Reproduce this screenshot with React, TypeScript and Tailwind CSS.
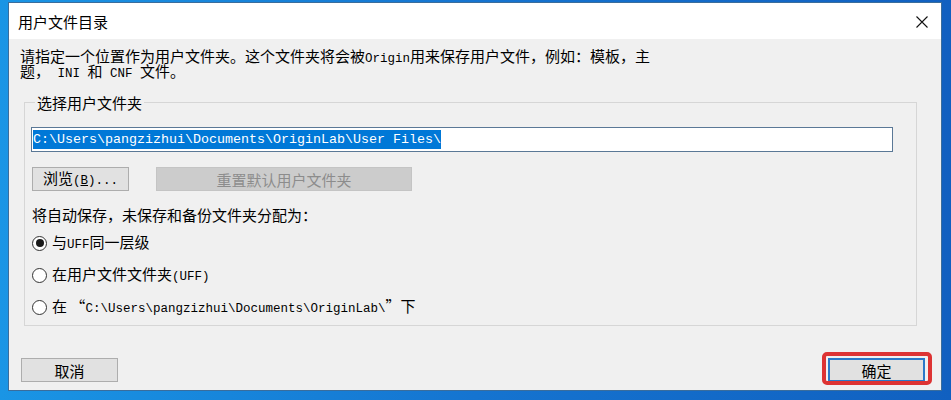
import React from "react";

const cjk = "font-['Noto_Sans_CJK_SC',sans-serif]";

function M({ children }: { children: React.ReactNode }) {
  return (
    <span className="font-['Liberation_Mono',monospace] text-[12.5px] leading-[15px] whitespace-pre">
      {children}
    </span>
  );
}

function Radio({ checked, children }: { checked?: boolean; children: React.ReactNode }) {
  return (
    <div className="flex items-center h-[20px]">
      <span className="flex items-center justify-center w-[15px] h-[15px] rounded-full border border-[#333333] bg-white">
        {checked && <span className="w-[8px] h-[8px] rounded-full bg-[#1a1a1a]" />}
      </span>
      <span className="ml-[5px] leading-[15px]">{children}</span>
    </div>
  );
}

export default function App() {
  return (
    <div className="w-[951px] h-[400px] overflow-hidden bg-gradient-to-r from-[#1a95e5] via-[#1574d0] to-[#1160c0] pt-[2px] pl-[8px]">
      <div className={`w-[934px] h-[389px] flex flex-col border border-[#3a6d9c] bg-[#f0f0f0] text-[15px] text-black ${cjk}`}>
        {/* title bar */}
        <div className="h-[36px] bg-white flex items-center justify-between pl-[9px] pr-[13px]">
          <span className="leading-[15px] mt-[1px]">用户文件目录</span>
          <svg width="12" height="12" viewBox="0 0 12 12" className="mt-[1px]">
            <path d="M0.5 0.5 L11.5 11.5 M11.5 0.5 L0.5 11.5" stroke="#111" strokeWidth="1.1" fill="none" />
          </svg>
        </div>

        <div className="flex-1 flex flex-col pl-[11px] pr-[24px] pt-[9px] pb-[8px]">
          <div className="h-[15px] leading-[15px] whitespace-nowrap">
            请指定一个位置作为用户文件夹。这个文件夹将会被<M>Origin</M>用来保存用户文件，例如：模板，主
          </div>
          <div className="h-[15px] leading-[15px] whitespace-nowrap">
            题，<M> INI </M>和<M> CNF </M>文件。
          </div>

          <fieldset className="mt-[17px] ml-[4px] border border-[#d6d6d6] pl-[6px] pr-[23px] pb-[8px]">
            <legend className="ml-[4px] px-[2px] leading-[15px]">选择用户文件夹</legend>

            <div className="mt-[17px] h-[25px] border border-[#5a7896] bg-white flex items-center pl-[1px]">
              <span className="bg-[#0078d7] text-white font-['Liberation_Mono',monospace] text-[13.33px] leading-[19px]">
                C:\Users\pangzizhui\Documents\OriginLab\User Files\
              </span>
            </div>

            <div className="mt-[15px] flex gap-[27px] ml-px">
              <button className="w-[97px] h-[24px] border border-[#adadad] bg-[#e1e1e1] leading-[15px]">
                浏览<M>(<span className="underline">B</span>)...</M>
              </button>
              <button disabled className="w-[256px] h-[24px] border border-[#c4c4c4] bg-[#cccccc] text-[#8c8c8c] leading-[15px]">
                重置默认用户文件夹
              </button>
            </div>

            <div className="mt-[16px] ml-px leading-[15px]">将自动保存，未保存和备份文件夹分配为：</div>

            <div className="mt-[11px] ml-px flex flex-col gap-[12px]">
              <Radio checked>
                与<M>UFF</M>同一层级
              </Radio>
              <Radio>
                在用户文件文件夹<M>(UFF)</M>
              </Radio>
              <Radio>
                在 “<M>C:\Users\pangzizhui\Documents\OriginLab\</M>”下
              </Radio>
            </div>
          </fieldset>

          <div className="mt-auto flex justify-between items-end ml-px -mr-[8px]">
            <button className="w-[97px] h-[24px] border border-[#adadad] bg-[#e1e1e1] leading-[15px]">取消</button>
            <div className="relative">
              <button className="w-[97px] h-[24px] border-2 border-[#2b78c8] bg-[#e1e1e1] leading-[15px]">确定</button>
              <div className="absolute -left-[6px] -right-[7px] -top-[6px] -bottom-[3px] border-4 border-[#dd3333] rounded-[5px]" />
            </div>
          </div>
        </div>
      </div>
    </div>
  );
}
